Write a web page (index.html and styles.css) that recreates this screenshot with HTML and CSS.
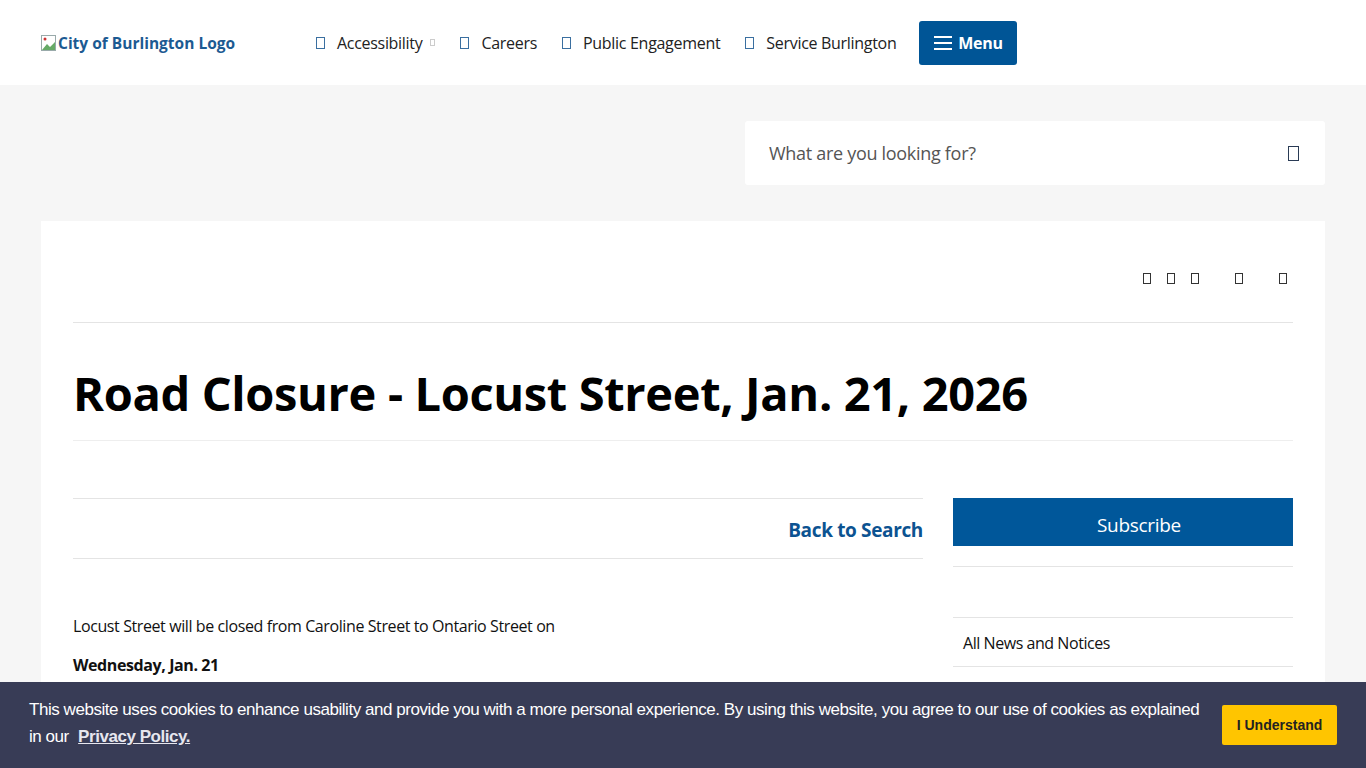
FILE: index.html
```html
<!DOCTYPE html>
<html lang="en">
<head>
<meta charset="utf-8">
<title>Road Closure - Locust Street, Jan. 21, 2026</title>
<link rel="stylesheet" href="styles.css">
</head>
<body>
<header class="site-header">
  <a class="logo" href="#"><svg class="broken" width="16" height="16" viewBox="0 0 16 16"><rect x="0.5" y="0.5" width="14" height="15" fill="#fff" stroke="#9aa"/><path d="M1 15 L6 9 L9 12 L14 7 L14 15 Z" fill="#6a6"/><circle cx="4" cy="4" r="1.5" fill="#c33"/></svg><span>City of Burlington Logo</span></a>
  <nav class="top-nav">
    <a href="#" class="nav-item"><i class="tofu blue"></i>Accessibility<i class="tofu tiny"></i></a>
    <a href="#" class="nav-item"><i class="tofu blue"></i>Careers</a>
    <a href="#" class="nav-item"><i class="tofu blue"></i>Public Engagement</a>
    <a href="#" class="nav-item"><i class="tofu blue"></i>Service Burlington</a>
  </nav>
  <button class="menu-btn"><svg width="18" height="16" viewBox="0 0 18 16"><rect y="1" width="18" height="2" fill="#fff"/><rect y="7" width="18" height="2" fill="#fff"/><rect y="13" width="18" height="2" fill="#fff"/></svg>Menu</button>
</header>
<main class="page">
  <div class="search-row">
    <div class="search-box"><span class="placeholder">What are you looking for?</span><i class="tofu dark big"></i></div>
  </div>
  <section class="card">
    <div class="tools">
      <i class="tofu dark"></i><i class="tofu dark"></i><i class="tofu dark"></i><i class="tofu dark gap"></i><i class="tofu dark gap"></i>
    </div>
    <h1 class="title">Road Closure - Locust Street, Jan. 21, 2026</h1>
    <div class="columns">
      <div class="left">
        <div class="back-bar"><a href="#" class="back">Back to Search</a></div>
        <p class="body-text">Locust Street will be closed from Caroline Street to Ontario Street on</p>
        <p class="body-text bold">Wednesday, Jan. 21</p>
      </div>
      <aside class="right">
        <button class="subscribe">Subscribe</button>
        <div class="spacer-line"></div>
        <a href="#" class="side-link">All News and Notices</a>
      </aside>
    </div>
  </section>
</main>
<div class="cookie-bar">
  <p class="cookie-text">This website uses cookies to enhance usability and provide you with a more personal experience. By using this website, you agree to our use of cookies as explained in our <a href="#">Privacy Policy.</a></p>
  <button class="agree">I Understand</button>
</div>
</body>
</html>
```
FILE: styles.css
```css
* { box-sizing: border-box; }
html, body { margin: 0; padding: 0; }
body {
  font-family: "Open Sans", "Noto Sans", sans-serif;
  background: #f6f6f6;
  color: #111;
  overflow: hidden;
  height: 768px;
}
a { text-decoration: none; color: inherit; }

.site-header {
  background: #fff;
  height: 85px;
  display: flex;
  align-items: center;
  padding: 0 41px;
}
.logo {
  display: flex;
  align-items: center;
  color: #1c5a92;
  font-weight: 700;
  font-size: 15.5px;
  width: 275px;
  letter-spacing: 0;
}
.logo .broken { margin-right: 1px; }
.top-nav { display: flex; align-items: center; }
.nav-item {
  display: flex;
  align-items: center;
  font-size: 16px;
  color: #222;
  margin-right: 25px;
  letter-spacing: -0.3px;
}
.tofu {
  display: inline-block;
  width: 9px;
  height: 12px;
  border: 1px solid #444;
  margin-right: 12px;
}
.tofu.blue { border-color: #3a6fa0; }
.tofu.tiny { width: 5px; height: 7px; border-color: #ccc; margin: 0 0 0 8px; }
.tofu.dark { border-color: #333; margin-right: 14px; }
.tofu.big { width: 11px; height: 15px; border-color: #2a3b55; margin: 0; }
.menu-btn {
  background: #005596;
  color: #fff;
  border: 0;
  border-radius: 3px;
  height: 44px;
  width: 98px;
  display: flex;
  align-items: center;
  justify-content: center;
  gap: 6px;
  font-family: inherit;
  font-weight: 700;
  font-size: 16px;
  margin-left: -2px;
  letter-spacing: -0.3px;
}

.page { padding: 36px 41px 0; }
.search-row { display: flex; justify-content: flex-end; }
.search-box {
  width: 580px;
  height: 64px;
  background: #fff;
  border-radius: 3px;
  display: flex;
  align-items: center;
  justify-content: space-between;
  padding: 0 26px 0 24px;
}
.placeholder { font-size: 18px; color: #555; letter-spacing: -0.3px; }

.card {
  background: #fff;
  margin-top: 36px;
  padding: 0 32px;
  height: 547px;
}
.tools {
  height: 102px;
  border-bottom: 1px solid #e4e4e4;
  display: flex;
  justify-content: flex-end;
  align-items: center;
  padding-right: 6px;
  padding-top: 14px;
}
.tools .tofu { width: 8px; height: 11px; margin: 0 0 0 16px; }
.tools .tofu.gap { margin-left: 36px; }
.title {
  margin: 0;
  font-size: 47px;
  font-weight: 700;
  line-height: 1;
  height: 118px;
  padding-top: 47px;
  border-bottom: 1px solid #eee;
  letter-spacing: -0.35px;
  color: #000;
}
.columns {
  display: flex;
  gap: 30px;
  padding-top: 57px;
}
.left { flex: 0 0 850px; }
.right { flex: 1; }
.back-bar {
  border-top: 1px solid #e4e4e4;
  border-bottom: 1px solid #e4e4e4;
  height: 61px;
  display: flex;
  justify-content: flex-end;
  align-items: center;
  padding-top: 2px;
}
.back { color: #0c5391; font-weight: 700; font-size: 19px; letter-spacing: -0.35px; }
.body-text { margin: 56px 0 0; font-size: 16px; color: #111; letter-spacing: -0.4px; line-height: 22px; }
.body-text.bold { font-weight: 700; margin-top: 17px; }
.subscribe {
  width: 100%;
  height: 48px;
  background: #00579a;
  color: #fff;
  border: 0;
  font-family: inherit;
  font-size: 19px;
  letter-spacing: -0.3px;
  padding: 6px 0 0 32px;
}
.spacer-line {
  height: 52px;
  margin-top: 20px;
  border-top: 1px solid #e4e4e4;
  border-bottom: 1px solid #e4e4e4;
}
.side-link {
  display: block;
  height: 49px;
  line-height: 50px;
  padding-left: 10px;
  font-size: 16px;
  color: #111;
  border-bottom: 1px solid #e4e4e4;
  letter-spacing: -0.45px;
}

.cookie-bar {
  position: fixed;
  left: 0;
  right: 0;
  bottom: 0;
  height: 86px;
  background: #383c56;
  display: flex;
  align-items: center;
  padding: 0 29px 4px;
  font-family: "Liberation Sans", Arial, sans-serif;
}
.cookie-text {
  margin: 0;
  color: #fff;
  font-size: 17px;
  line-height: 27px;
  flex: 0 0 1172px;
  letter-spacing: -0.45px;
}
.cookie-text a { color: #e6e6ee; font-weight: 700; text-decoration: underline; margin-left: 5px; }
.agree {
  margin-left: 21px;
  margin-top: 4px;
  background: #ffc500;
  color: #222;
  border: 0;
  width: 115px;
  height: 40px;
  font-family: "Liberation Sans", Arial, sans-serif;
  font-weight: 700;
  font-size: 14px;
  border-radius: 2px;
}
```
